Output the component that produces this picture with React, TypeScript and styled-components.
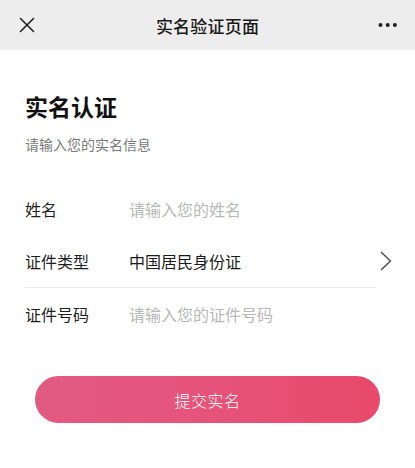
import React from "react";
import styled, { createGlobalStyle } from "styled-components";

const Global = createGlobalStyle`
  html, body { margin: 0; padding: 0; background: #ffffff; }
  body { font-family: "Noto Sans CJK SC", "Noto Sans", sans-serif; }
  * { box-sizing: border-box; }
`;

const Page = styled.div`
  width: 415px;
  min-height: 468px;
  background: #ffffff;
  display: flex;
  flex-direction: column;
`;

const NavBar = styled.header`
  height: 50px;
  background: #ededed;
  display: grid;
  grid-template-columns: 60px 1fr 60px;
  align-items: center;
`;

const NavButton = styled.button<{ $align: "start" | "end" }>`
  border: none;
  background: none;
  padding: 0;
  height: 50px;
  display: flex;
  align-items: center;
  justify-content: ${(p) => (p.$align === "start" ? "flex-start" : "flex-end")};
  padding-left: ${(p) => (p.$align === "start" ? "19px" : "0")};
  padding-right: ${(p) => (p.$align === "end" ? "17px" : "0")};
  cursor: pointer;
`;

const NavTitle = styled.h1`
  margin: 0;
  text-align: center;
  font-size: 17px;
  font-weight: 500;
  color: #1a1a1a;
  letter-spacing: 0.2px;
`;

const Content = styled.main`
  padding: 40px 25px 0 25px;
  display: flex;
  flex-direction: column;
`;

const Heading = styled.h2`
  margin: 0;
  font-size: 23px;
  line-height: 32px;
  font-weight: 700;
  color: #111111;
`;

const SubTitle = styled.p`
  margin: 12px 0 0 0;
  font-size: 14px;
  line-height: 20px;
  color: #7a7a7a;
`;

const Form = styled.div`
  margin-top: 29px;
  display: flex;
  flex-direction: column;
`;

const Row = styled.div`
  height: 52px;
  display: flex;
  align-items: center;
`;

const Label = styled.span`
  width: 104px;
  flex-shrink: 0;
  font-size: 16px;
  color: #1f1f1f;
`;

const Input = styled.input`
  flex: 1;
  border: none;
  outline: none;
  background: transparent;
  padding: 0;
  font-family: inherit;
  font-size: 16px;
  color: #1f1f1f;
  &::placeholder { color: #b8b8b8; }
`;

const Value = styled.span`
  flex: 1;
  font-size: 16px;
  color: #1a1a1a;
`;

const Chevron = styled.svg`
  width: 12px;
  height: 20px;
  margin-right: -2px;
`;

const Divider = styled.div`
  height: 1px;
  background: #ececec;
  margin-right: 14px;
`;

const Submit = styled.button`
  margin: 36px 35px 0 35px;
  height: 47px;
  border: none;
  border-radius: 24px;
  background: linear-gradient(90deg, #e15a82 0%, #e6537a 50%, #e8496a 100%);
  color: #ffffff;
  font-family: inherit;
  font-size: 16px;
  font-weight: 300;
  letter-spacing: 0.5px;
  cursor: pointer;
`;

export default function App() {
  return (
    <>
      <Global />
      <Page>
        <NavBar>
          <NavButton $align="start" aria-label="关闭">
            <svg width="16" height="16" viewBox="0 0 16 16">
              <path d="M1.5 1.5 L14.5 14.5 M14.5 1.5 L1.5 14.5" stroke="#222" strokeWidth="1.6" strokeLinecap="round" />
            </svg>
          </NavButton>
          <NavTitle>实名验证页面</NavTitle>
          <NavButton $align="end" aria-label="更多">
            <svg width="20" height="6" viewBox="0 0 20 6">
              <circle cx="2.5" cy="3" r="2" fill="#222" />
              <circle cx="9.7" cy="3" r="2" fill="#222" />
              <circle cx="16.9" cy="3" r="2" fill="#222" />
            </svg>
          </NavButton>
        </NavBar>
        <Content>
          <Heading>实名认证</Heading>
          <SubTitle>请输入您的实名信息</SubTitle>
          <Form>
            <Row>
              <Label>姓名</Label>
              <Input placeholder="请输入您的姓名" />
            </Row>
            <Row>
              <Label>证件类型</Label>
              <Value>中国居民身份证</Value>
              <Chevron viewBox="0 0 12 20">
                <path d="M1.5 1.5 L10.5 10 L1.5 18.5" fill="none" stroke="#555" strokeWidth="1.7" strokeLinecap="round" strokeLinejoin="round" />
              </Chevron>
            </Row>
            <Divider />
            <Row>
              <Label>证件号码</Label>
              <Input placeholder="请输入您的证件号码" />
            </Row>
          </Form>
        </Content>
        <Submit>提交实名</Submit>
      </Page>
    </>
  );
}
